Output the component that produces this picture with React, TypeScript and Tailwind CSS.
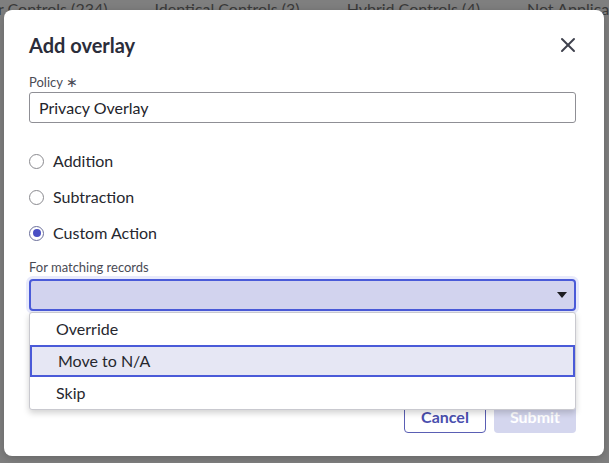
import React, { useState } from "react";
import { X } from "lucide-react";

const actions = ["Addition", "Subtraction", "Custom Action"];
const matchOptions = ["Override", "Move to N/A", "Skip"];

function Radio({ label, checked }: { label: string; checked: boolean }) {
  return (
    <label className="flex items-center gap-[9px] h-[20px] cursor-pointer">
      <span
        className={`flex items-center justify-center w-[15px] h-[15px] rounded-full border bg-white ${
          checked ? "border-[#6b6f9a]" : "border-[#8a8a8f]"
        }`}
      >
        {checked && <span className="w-[8px] h-[8px] rounded-full bg-[#4a4fc4]" />}
      </span>
      <span className="text-[16px] text-[#26272e]">{label}</span>
    </label>
  );
}

export default function App() {
  const [action] = useState("Custom Action");
  const [hovered] = useState("Move to N/A");

  return (
    <div
      className="relative h-[463px] w-[609px] overflow-hidden bg-[#7f7f7f]"
      style={{ fontFamily: "Lato, 'Noto Sans', sans-serif" }}
    >
      {/* tab strip of the page behind the backdrop */}
      <div className="absolute top-[-3px] left-[-2px] flex gap-[47px] whitespace-nowrap text-[16px] text-[#3a3a3a]">
        <span>r Controls (234)</span>
        <span>Identical Controls (3)</span>
        <span>Hybrid Controls (4)</span>
        <span>Not Applicable (4)</span>
      </div>

      <div className="relative ml-[4px] mt-[10px] w-[600px] h-[446px] rounded-[8px] bg-white pl-[25px] pr-[28px] pt-[22px] shadow-[0_2px_10px_rgba(0,0,0,0.2)]">
        <div className="flex items-center justify-between h-[26px]">
          <h2 className="text-[20px] font-bold text-[#2b2d3a]">Add overlay</h2>
          <button type="button" className="text-[#3f414d] -mr-[4px]" aria-label="Close">
            <X className="w-[24px] h-[24px]" strokeWidth={2} />
          </button>
        </div>

        <div className="mt-[15px]">
          <div className="text-[13px] leading-[18px] text-[#4a4b55]">
            Policy <span className="text-[14px]">∗</span>
          </div>
          <div className="mt-[1px] flex items-center h-[31px] rounded-[3px] border border-[#8f8f95] px-[9px] text-[16px] text-[#23242b]">
            Privacy Overlay
          </div>
        </div>

        <div className="mt-[28px] flex flex-col gap-[16px]">
          {actions.map((a) => (
            <Radio key={a} label={a} checked={a === action} />
          ))}
        </div>

        <div className="mt-[15px]">
          <div className="text-[13px] leading-[18px] text-[#4a4b55]">For matching records</div>
          <div className="relative mt-[3px]">
            <div className="flex items-center justify-end h-[32px] rounded-[4px] border-2 border-[#4a5ad8] bg-[#d2d3ee] pr-[6px] ring-[3px] ring-[#e8eafb]">
              <svg width="10" height="6" viewBox="0 0 10 6" className="mr-[1px]">
                <path d="M0 0h10L5 6z" fill="#1d1d22" />
              </svg>
            </div>

            {/* open listbox */}
            <ul className="absolute left-0 right-0 top-[33px] z-10 rounded-[3px] border border-[#c9c9cf] bg-white shadow-[0_3px_6px_rgba(0,0,0,0.18)]">
              {matchOptions.map((o) => (
                <li
                  key={o}
                  className={`flex items-center h-[32px] pl-[26px] text-[16px] text-[#26272e] ${
                    o === hovered ? "border-2 border-[#4a5ad8] bg-[#e6e7f4] pl-[23px]" : ""
                  }`}
                >
                  {o}
                </li>
              ))}
            </ul>
          </div>
        </div>

        <div className="mt-[89px] flex justify-end gap-[8px]">
          <button
            type="button"
            className="w-[82px] h-[33px] rounded-[4px] border border-[#5a5fb4] text-[16px] font-bold text-[#4a4fae] bg-white"
          >
            Cancel
          </button>
          <button
            type="button"
            disabled
            className="w-[82px] h-[33px] rounded-[4px] bg-[#d4d6ee] text-[16px] font-bold text-white"
          >
            Submit
          </button>
        </div>
      </div>
    </div>
  );
}
